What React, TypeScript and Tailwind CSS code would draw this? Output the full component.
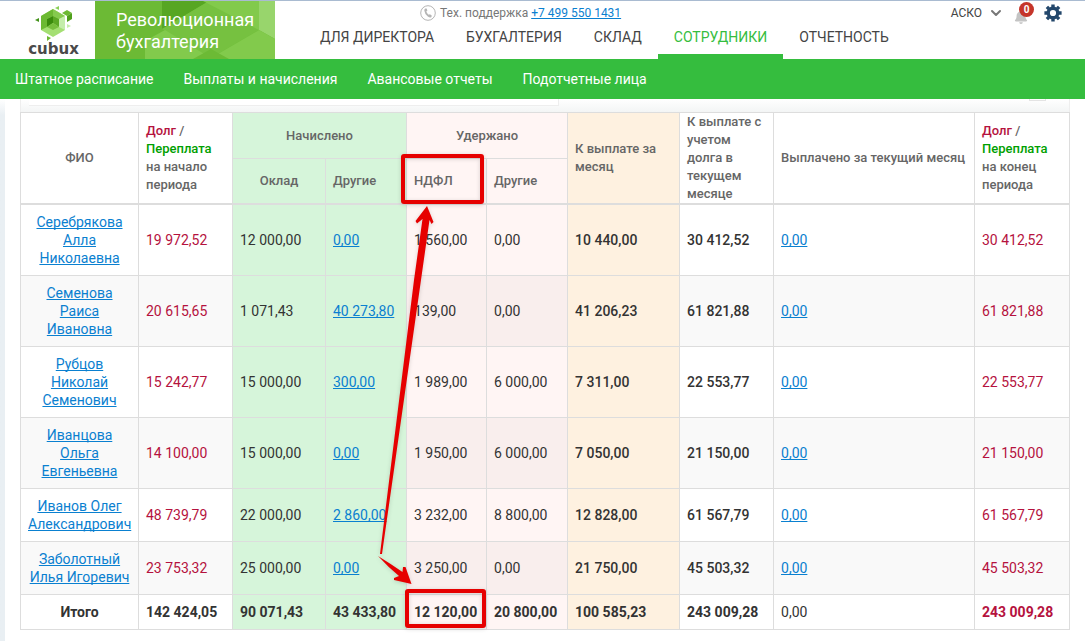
import { FaBell } from "react-icons/fa";
import { FiChevronDown } from "react-icons/fi";

interface Employee {
  name: string;
  debtStart: string;
  salary: string;
  accruedOther: string;
  ndfl: string;
  withheldOther: string;
  toPayMonth: string;
  toPayTotal: string;
  paid: string;
  debtEnd: string;
}

const employees: Employee[] = [
  { name: "Серебрякова Алла Николаевна", debtStart: "19 972,52", salary: "12 000,00", accruedOther: "0,00", ndfl: "1 560,00", withheldOther: "0,00", toPayMonth: "10 440,00", toPayTotal: "30 412,52", paid: "0,00", debtEnd: "30 412,52" },
  { name: "Семенова Раиса Ивановна", debtStart: "20 615,65", salary: "1 071,43", accruedOther: "40 273,80", ndfl: "139,00", withheldOther: "0,00", toPayMonth: "41 206,23", toPayTotal: "61 821,88", paid: "0,00", debtEnd: "61 821,88" },
  { name: "Рубцов Николай Семенович", debtStart: "15 242,77", salary: "15 000,00", accruedOther: "300,00", ndfl: "1 989,00", withheldOther: "6 000,00", toPayMonth: "7 311,00", toPayTotal: "22 553,77", paid: "0,00", debtEnd: "22 553,77" },
  { name: "Иванцова Ольга Евгеньевна", debtStart: "14 100,00", salary: "15 000,00", accruedOther: "0,00", ndfl: "1 950,00", withheldOther: "6 000,00", toPayMonth: "7 050,00", toPayTotal: "21 150,00", paid: "0,00", debtEnd: "21 150,00" },
  { name: "Иванов Олег Александрович", debtStart: "48 739,79", salary: "22 000,00", accruedOther: "2 860,00", ndfl: "3 232,00", withheldOther: "8 800,00", toPayMonth: "12 828,00", toPayTotal: "61 567,79", paid: "0,00", debtEnd: "61 567,79" },
  { name: "Заболотный Илья Игоревич", debtStart: "23 753,32", salary: "25 000,00", accruedOther: "0,00", ndfl: "3 250,00", withheldOther: "0,00", toPayMonth: "21 750,00", toPayTotal: "45 503,32", paid: "0,00", debtEnd: "45 503,32" },
];

const sections = ["Для директора", "Бухгалтерия", "Склад", "Сотрудники", "Отчетность"];
const subsections = ["Штатное расписание", "Выплаты и начисления", "Авансовые отчеты", "Подотчетные лица"];

const cell = "border-r border-b border-[#dddddd] px-[7px] py-2";
const headCell = "border-r border-[#dddddd] px-[7px] font-medium";
const link = "text-[#0a80d0] underline underline-offset-1 [text-decoration-skip-ink:none]";

const Logo = () => (
  <a href="#" className="flex w-[95px] shrink-0 flex-col items-center pt-1 pl-3">
    <svg width="38" height="36" viewBox="0 0 38 36" aria-hidden="true">
      <polygon points="18,4 30,11 30,25 18,32 6,25 6,11" fill="#a4df73" />
      <polygon points="18,4 6,11 6,25 12,22 12,14 18,11" fill="#6cb932" />
      <polygon points="18,4 30,11 24,14 18,11" fill="#85ca4e" />
      <polygon points="30,11 30,25 24,22 24,14" fill="#c4edaa" />
      <polygon points="18,11 24,14 24,22 18,18" fill="#5ba824" />
      <polygon points="12,14 18,11 18,18 12,22" fill="#3b8b0c" />
      <polygon points="12,22 18,18 24,22 18,25" fill="#77bf3d" />
      <polygon points="32,5 37,8 32,11 27,8" fill="#6cb932" />
      <polygon points="37,8 37,14 32,17 32,11" fill="#4fa01b" />
      <polygon points="24,1 24,5 20,3" fill="#8bcf58" />
      <polygon points="0,15 4,13 4,17" fill="#43921a" />
      <polygon points="32,19 36,21 32,23" fill="#c4edaa" />
      <polygon points="12,31 16,33 12,36" fill="#6cb932" />
    </svg>
    <span className="font-['DejaVu_Sans'] text-[15px] leading-4 font-bold text-[#4a4a4a]">cubux</span>
  </a>
);

const Banner = () => (
  <div className="relative w-[180px] shrink-0 overflow-hidden bg-[#6cba35]">
    <svg className="absolute inset-0" width="180" height="58" viewBox="0 0 180 58" aria-hidden="true">
      <polygon points="67,0 114,0 67,28" fill="#57a623" />
      <polygon points="114,0 164,0 164,29 116,57 67,28" fill="#76c140" />
      <polygon points="108,0 164,0 164,29" fill="#82ca4c" />
      <polygon points="164,0 180,0 180,38 164,29" fill="#98d56c" />
      <polygon points="50,40 70,29 116,57 164,29 180,38 180,58 50,58" fill="#82ca4c" />
      <polygon points="98,58 116,48 134,58" fill="#6cba35" />
    </svg>
    <p className="relative pt-2 pl-[21px] text-[18px] leading-[22px] text-white">
      Революционная
      <br />
      бухгалтерия
    </p>
  </div>
);

const PhoneIcon = () => (
  <svg width="16" height="16" viewBox="0 0 16 16" aria-hidden="true">
    <circle cx="8" cy="8" r="7.3" fill="none" stroke="#b5b5b5" />
    <path d="M5.2 3.6 6.6 3.4 7.4 5.6 6.3 6.5Q6.9 8.5 8.7 9.8L10 9.2 11.9 10.8 11.2 12.2Q9.8 13 7.8 11.4 4.6 8.8 4.3 5.4 4.3 4.2 5.2 3.6Z" fill="#b5b5b5" />
  </svg>
);

const GearIcon = () => (
  <svg width="18" height="18" viewBox="0 0 18 18" fill="none" stroke="#23476b" aria-hidden="true">
    <circle cx="9" cy="9" r="4.8" strokeWidth="3.4" />
    <path d="M9 .4V3M9 15v2.600M.4 9H3M15 9h2.600M2.900 2.900 4.800 4.800M13.200 13.200l1.900 1.900M15.100 2.900 13.200 4.800M4.800 13.200 2.900 15.100" strokeWidth="3.4" />
  </svg>
);

const Header = () => (
  <header>
    <div className="flex h-[59px] border-t border-[#a9bbd1] bg-white">
      <Logo />
      <Banner />
      <div className="ml-[29px] flex flex-col">
        <p className="flex items-center gap-1 pt-1 pl-[116px] text-[12px] leading-4 text-[#777777]">
          <PhoneIcon />
          <span>
            Тех. поддержка <a href="tel:+74995501431" className={link}>+7 499 550 1431</a>
          </span>
        </p>
        <nav className="flex flex-1">
          {sections.map((item) => (
            <a
              key={item}
              href="#"
              className={
                item === "Сотрудники"
                  ? "border-b-5 border-[#35bd3e] px-4 pt-1.5 text-[14px] leading-5 text-[#35bd3e] uppercase"
                  : "px-4 pt-1.5 text-[14px] leading-5 text-[#444444] uppercase"
              }
            >
              {item}
            </a>
          ))}
        </nav>
      </div>
      <div className="ml-auto flex h-6 items-center pr-[23px] text-[12px] text-[#444444]">
        <button type="button" className="flex items-center gap-1.5">
          АСКО
          <FiChevronDown className="h-4 w-4 text-[#777777]" strokeWidth={3} />
        </button>
        <button type="button" aria-label="Уведомления" className="relative ml-2.5 h-6 w-5">
          <FaBell className="mt-2 h-3.5 w-3.5 text-[#c4c4c4]" />
          <span className="absolute top-px right-0 flex h-[15px] w-[15px] items-center justify-center rounded-full bg-[#c5352a] text-[10px] leading-none font-bold text-white">
            0
          </span>
        </button>
        <button type="button" aria-label="Настройки" className="ml-2.5">
          <GearIcon />
        </button>
      </div>
    </div>
    <nav className="flex h-10 items-center bg-[#35bd3e] text-[14px] text-white">
      {subsections.map((item) => (
        <a key={item} href="#" className="px-[15px]">
          {item}
        </a>
      ))}
    </nav>
  </header>
);

const DebtTitle = ({ period }: { period: string }) => (
  <>
    <span className="text-[#b5123e]">Долг</span> /<br />
    <span className="text-[#00a000]">Переплата</span>
    <br />
    на {period}
    <br />
    периода
  </>
);

const Row = ({ employee, striped }: { employee: Employee; striped: boolean }) => {
  const pink = striped ? "bg-[#f9eeed]" : "bg-[#fff5f4]";

  return (
    <tr className={striped ? "bg-[#f9f9f9]" : "bg-white"}>
      <td className={`${cell} text-center`}>
        <a href="#" className={link}>{employee.name}</a>
      </td>
      <td className={`${cell} text-[#b5123e]`}>{employee.debtStart}</td>
      <td className={`${cell} bg-[#d6f5da]`}>{employee.salary}</td>
      <td className={`${cell} bg-[#d6f5da]`}>
        <a href="#" className={link}>{employee.accruedOther}</a>
      </td>
      <td className={`${cell} ${pink}`}>{employee.ndfl}</td>
      <td className={`${cell} ${pink}`}>{employee.withheldOther}</td>
      <td className={`${cell} bg-[#fef1e0] font-medium`}>{employee.toPayMonth}</td>
      <td className={`${cell} font-medium`}>{employee.toPayTotal}</td>
      <td className={cell}>
        <a href="#" className={link}>{employee.paid}</a>
      </td>
      <td className={`${cell} text-[#b5123e]`}>{employee.debtEnd}</td>
    </tr>
  );
};

// Marks the tax column and its total
const Annotations = () => (
  <svg
    className="pointer-events-none absolute top-0 left-0"
    width="480"
    height="530"
    viewBox="20 112 480 530"
    fill="none"
    aria-hidden="true"
  >
    <g className="drop-shadow-sm">
      <rect x="403" y="156" width="79" height="46" rx="1" stroke="#e60000" strokeWidth="4" />
      <rect x="407" y="591" width="77" height="35" rx="1" stroke="#e60000" strokeWidth="4" />
      <path d="M380 554 414 280 422.500 219 417 223.500 415.500 221 427 206 433.500 222 431.500 224 429.500 220 421 280 382 554Z" fill="#e60000" />
      <path d="M378 556Q391 564 402.500 572L403 567 405.500 567 411.500 584 394 580 394 578 399 576Q388 567 378 556Z" fill="#e60000" />
    </g>
  </svg>
);

const PayrollTable = () => (
  <div className="relative">
    <table className="w-full table-fixed border-separate border-spacing-0 border-t border-l border-[#dddddd] text-left text-[14px] leading-[18px] text-[#333333]">
      <colgroup>
        <col className="w-[118px]" />
        <col className="w-[94px]" />
        <col className="w-[93px]" />
        <col className="w-[81px]" />
        <col className="w-[80px]" />
        <col className="w-[81px]" />
        <col className="w-[112px]" />
        <col className="w-[94px]" />
        <col />
        <col className="w-[95px]" />
      </colgroup>
      <thead className="text-[13px] text-[#666666]">
        <tr className="h-[46px]">
          <th rowSpan={2} className={`${headCell} border-b-2 text-center`}>ФИО</th>
          <th rowSpan={2} className={`${headCell} border-b-2`}>
            <DebtTitle period="начало" />
          </th>
          <th colSpan={2} className={`${headCell} border-b bg-[#d6f5da] text-center`}>Начислено</th>
          <th colSpan={2} className={`${headCell} border-b bg-[#fff5f4] text-center`}>Удержано</th>
          <th rowSpan={2} className={`${headCell} border-b-2 bg-[#fef1e0]`}>К выплате за месяц</th>
          <th rowSpan={2} className={`${headCell} border-b-2`}>К выплате с учетом долга в текущем месяце</th>
          <th rowSpan={2} className={`${headCell} border-b-2 whitespace-nowrap`}>Выплачено за текущий месяц</th>
          <th rowSpan={2} className={`${headCell} border-b-2`}>
            <DebtTitle period="конец" />
          </th>
        </tr>
        <tr className="h-[46px]">
          <th className={`${headCell} border-b-2 bg-[#d6f5da] text-center`}>Оклад</th>
          <th className={`${headCell} border-b-2 bg-[#d6f5da]`}>Другие</th>
          <th className={`${headCell} border-b-2 bg-[#fff5f4]`}>НДФЛ</th>
          <th className={`${headCell} border-b-2 bg-[#fff5f4]`}>Другие</th>
        </tr>
      </thead>
      <tbody>
        {employees.map((employee, index) => (
          <Row key={employee.name} employee={employee} striped={index % 2 === 1} />
        ))}
      </tbody>
      <tfoot>
        <tr className="font-bold">
          <td className={`${cell} text-center`}>Итого</td>
          <td className={cell}>142 424,05</td>
          <td className={`${cell} bg-[#d6f5da]`}>90 071,43</td>
          <td className={`${cell} bg-[#d6f5da]`}>43 433,80</td>
          <td className={`${cell} bg-[#fff5f4]`}>12 120,00</td>
          <td className={`${cell} bg-[#fff5f4]`}>20 800,00</td>
          <td className={`${cell} bg-[#fef1e0]`}>100 585,23</td>
          <td className={cell}>243 009,28</td>
          <td className={`${cell} font-normal`}>0,00</td>
          <td className={`${cell} text-[#b5123e]`}>243 009,28</td>
        </tr>
      </tfoot>
    </table>
    <Annotations />
  </div>
);

const App = () => {
  return (
    <div className="flex min-h-screen flex-col bg-white font-[Roboto,sans-serif]">
      <Header />
      <div className="flex flex-1">
        <div className="w-[5px] shrink-0 bg-linear-to-b from-white to-[#e9eff3] to-3%" />
        <main className="min-w-0 flex-1 px-[15px]">
          <div className="flex h-[13px] items-start justify-between border-x border-[#eeeeee] bg-linear-to-b from-white to-[#f3f5f5] pr-[23px] pl-2">
            <div className="h-[7px] w-[530px] border-r border-b border-[#eeeeee] bg-white" />
            <div className="h-[2px] w-[17px] border-x border-b border-[#e4e4e4]" />
          </div>
          <PayrollTable />
        </main>
      </div>
    </div>
  );
};

export default App;
